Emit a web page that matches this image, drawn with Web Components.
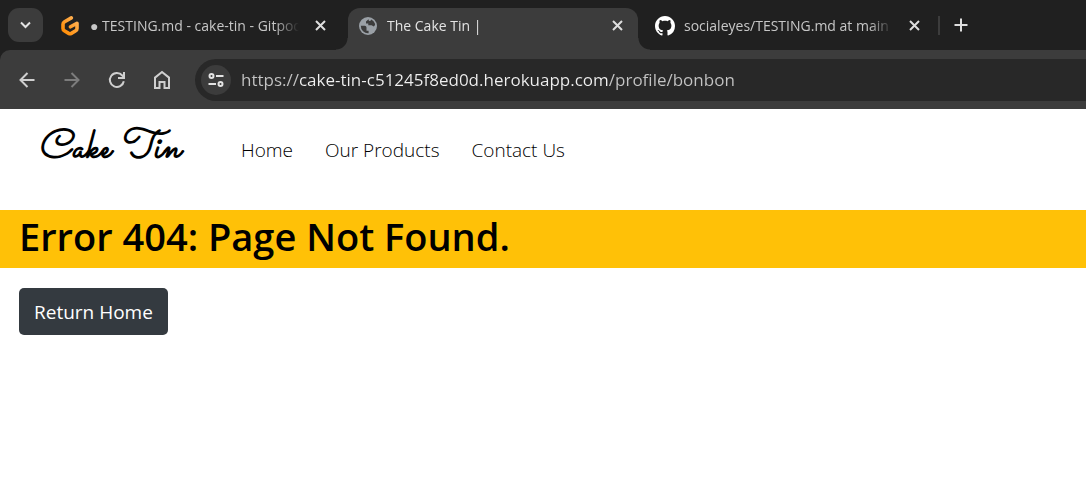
<!DOCTYPE html>
<html lang="en">
<head>
<meta charset="utf-8">
<meta name="viewport" content="width=device-width, initial-scale=1">
<title>The Cake Tin |</title>
<style>
  body { margin: 0; background: #fff; color: #000; font-family: "Open Sans", "Noto Sans", sans-serif; }
</style>
</head>
<body>
<browser-window></browser-window>

<template id="t-window">
  <style>
    :host { display: block; }
    .chrome { background: #202020; }
    .strip { display: flex; align-items: flex-end; height: 50px; padding-left: 8px; overflow: hidden; }
    .search { width: 35px; height: 34px; margin: 0 8px 8px 0; flex: none; border: 0; padding: 0; border-radius: 11px; background: #3c3c3c; display: grid; place-items: center; }
    .tabs { display: flex; gap: 7px; min-width: 0; }
    .divider { width: 2px; height: 19px; margin: 0 9px 15px 3px; background: #3c3c3c; flex: none; }
    .new { border: 0; padding: 0; background: none; width: 24px; height: 24px; margin-bottom: 13px; display: grid; place-items: center; flex: none; }
    svg { display: block; fill: none; }
  </style>
  <header class="chrome">
    <div class="strip">
      <button class="search" aria-label="Search tabs"><svg width="13" height="10" viewBox="0 0 13 10" stroke="#e3e3e3" stroke-width="2"><path d="M2 2.5l4.5 4.5L11 2.5"/></svg></button>
      <div class="tabs">
        <browser-tab>
          <svg slot="icon" width="20" height="20" viewBox="0 0 20 20"><defs><linearGradient id="g" x1="1" y1="0" x2="0" y2="1"><stop offset="0" stop-color="#ffb45b"/><stop offset="1" stop-color="#ff8a00"/></linearGradient></defs><path d="M10.3 1.9L3.600 5.800Q2 6.8 2 8.300V12.500Q2 14 3.300 14.700L7.700 17.400Q9 18.100 10.300 17.400L14.700 14.700Q16 14 16 12.500V7.200L9.500 10.800" stroke="url(#g)" stroke-width="3.600" stroke-linecap="round" stroke-linejoin="round"/></svg>
          ● TESTING.md - cake-tin - Gitpod Code
        </browser-tab>
        <browser-tab active>
          <svg slot="icon" width="20" height="20" viewBox="0 0 20 20"><circle cx="10" cy="10" r="9" fill="#9aa0a6"/><path d="M10.500 3.200L8 5.500V7.400H10.300V9.200H13.600L15.800 10.600Q17.300 9.500 17.100 8.100A7.300 7.300 0 0 0 13.400 3.500Q12.800 5 11 5ZM2.800 9.800A7.200 7.200 0 0 0 10.600 17.200V14.800H8.500V11.500Q8.500 9.800 6.600 9.800Z" fill="#3c3c3c"/></svg>
          The Cake Tin |
        </browser-tab>
        <browser-tab>
          <svg slot="icon" width="20" height="20" viewBox="0 0 16 16"><path fill="#fff" d="M8 0C3.58 0 0 3.58 0 8c0 3.54 2.29 6.53 5.47 7.59.4.07.55-.17.55-.38 0-.19-.01-.82-.01-1.49-2.01.37-2.53-.49-2.69-.94-.09-.23-.48-.94-.82-1.13-.28-.15-.68-.52-.01-.53.63-.01 1.08.58 1.23.82.72 1.21 1.87.87 2.33.66.07-.52.28-.87.51-1.07-1.78-.2-3.64-.89-3.64-3.95 0-.87.31-1.59.82-2.15-.08-.2-.36-1.02.08-2.12 0 0 .67-.21 2.2.82.64-.18 1.32-.27 2-.27s1.36.09 2 .27c1.53-1.04 2.2-.82 2.2-.82.44 1.1.16 1.92.08 2.12.51.56.82 1.27.82 2.15 0 3.07-1.87 3.75-3.65 3.95.29.25.54.73.54 1.48 0 1.07-.01 1.93-.01 2.2 0 .21.15.46.55.38A8.01 8.01 0 0 0 16 8c0-4.42-3.58-8-8-8z"/></svg>
          socialeyes/TESTING.md at main
        </browser-tab>
      </div>
      <span class="divider"></span>
      <button class="new" aria-label="New tab"><svg width="14" height="14" viewBox="0 0 14 14" stroke="#dedede" stroke-width="2"><path d="M7 .5v13M.5 7h13"/></svg></button>
    </div>
    <browser-toolbar></browser-toolbar>
  </header>
  <site-header></site-header>
  <error-page></error-page>
</template>

<template id="t-tab">
  <style>
    :host { display: flex; align-items: center; box-sizing: border-box; flex: 0 1 290px; width: 290px; height: 42px; padding: 0 12px 7px 10px; position: relative; color: #c7c7c7; border-radius: 12px 12px 0 0; }
    :host([active]) { background: #3c3c3c; color: #e3e3e3; }
    :host([active])::before, :host([active])::after { content: ""; position: absolute; bottom: 0; width: 12px; height: 12px; }
    :host([active])::before { right: 100%; background: radial-gradient(circle at 0 0, transparent 11px, #3c3c3c 12px); }
    :host([active])::after { left: 100%; background: radial-gradient(circle at 100% 0, transparent 11px, #3c3c3c 12px); }
    .title { flex: 1; min-width: 0; margin: 0 13px 0 9px; overflow: hidden; white-space: nowrap; font-size: 14px; line-height: 20px; -webkit-mask-image: linear-gradient(to left, transparent, #000 24px); mask-image: linear-gradient(to left, transparent, #000 24px); }
    button { border: 0; background: none; padding: 0; width: 17px; height: 18px; display: grid; place-items: center; color: #dedede; }
  </style>
  <slot name="icon"></slot>
  <span class="title"><slot></slot></span>
  <button aria-label="Close tab"><svg width="11" height="11" viewBox="0 0 11 11" stroke="currentColor" stroke-width="2"><path d="M1 1l9 9M10 1l-9 9"/></svg></button>
</template>

<template id="t-toolbar">
  <style>
    :host { display: flex; align-items: center; height: 59px; background: #3c3c3c; border-radius: 10px 0 0 0; padding-left: 15px; overflow: hidden; }
    button { border: 0; padding: 0; background: none; display: grid; place-items: center; flex: none; }
    nav { display: flex; gap: 21px; margin-right: 21px; }
    nav button { width: 24px; height: 24px; }
    .box { flex: 1; display: flex; align-items: center; gap: 10px; height: 42px; padding-left: 6px; background: #282828; border-radius: 21px 0 0 21px; }
    .box button { width: 30px; height: 30px; border-radius: 50%; background: #3c3c3c; }
    input { flex: 1; min-width: 0; border: 0; padding: 0; outline: 0; font: 17px/24px "Open Sans", "Noto Sans", sans-serif; color: transparent; background: linear-gradient(to right, #c4c4c4 58px, #f0f0f0 58px 367px, #c4c4c4 367px); -webkit-background-clip: text; background-clip: text; }
    svg { fill: none; stroke: #cfcfcf; stroke-width: 2; }
  </style>
  <nav aria-label="Browser">
    <button aria-label="Back"><svg width="16" height="16" viewBox="0 0 16 16"><path d="M15.500 8H2M8.500 1L1.500 8l7 7"/></svg></button>
    <button aria-label="Forward" disabled><svg width="16" height="16" viewBox="0 0 16 16" style="stroke:#7c7c7c"><path d="M.5 8H14M7.500 1l7 7-7 7"/></svg></button>
    <button aria-label="Reload"><svg width="18" height="18" viewBox="0 0 18 18"><path d="M15.800 10.200A7 7 0 1 1 14.300 4.500L16 6.200M16 1v6h-6"/></svg></button>
    <button aria-label="Home page"><svg width="18" height="20" viewBox="0 0 18 20"><path d="M2 7.600L9 2l7 5.600V18h-4.500v-6h-5v6H2Z"/></svg></button>
  </nav>
  <div class="box">
    <button aria-label="View site information"><svg width="16" height="14" viewBox="0 0 16 14" style="stroke:#e3e3e3"><circle cx="3.500" cy="3" r="2"/><path d="M8 3h7.500M.5 11H8"/><circle cx="12.500" cy="11" r="2"/></svg></button>
    <input type="text" aria-label="Address" spellcheck="false" value="https://cake-tin-c51245f8ed0d.herokuapp.com/profile/bonbon">
  </div>
</template>

<template id="t-header">
  <style>
    :host { display: flex; align-items: flex-start; box-sizing: border-box; height: 101px; padding: 10px 38px 0; }
    a { color: #000; text-decoration: none; }
    .brand { font: italic bold 40px/60px "Sacramento", "Petit Formal Script", "Liberation Serif", cursive; width: 203px; flex: none; }
    nav { display: flex; gap: 32px; padding-top: 17px; font-size: 19px; line-height: 28px; font-weight: 300; white-space: nowrap; }
  </style>
  <a class="brand" href="#">Cake Tin</a>
  <nav aria-label="Main"><a href="#">Home</a><a href="#">Our Products</a><a href="#">Contact Us</a></nav>
</template>

<template id="t-error">
  <style>
    :host { display: block; }
    h1 { margin: 0 0 20px; padding: 2px 19px 8px; background: #ffc107; font-size: 38px; line-height: 48px; font-weight: 600; }
    button { margin-left: 19px; padding: 10px 15px 9px; border: 0; border-radius: 5px; background: #343a40; color: #fff; font: 19px/28px "Open Sans", "Noto Sans", sans-serif; }
  </style>
  <main>
    <h1>Error 404: Page Not Found.</h1>
    <button type="button">Return Home</button>
  </main>
</template>

<script>
  const define = (name, id) => customElements.define(name, class extends HTMLElement {
    constructor() {
      super();
      this.attachShadow({ mode: "open" }).append(document.getElementById(id).content.cloneNode(true));
    }
  });
  define("browser-tab", "t-tab");
  define("browser-toolbar", "t-toolbar");
  define("site-header", "t-header");
  define("error-page", "t-error");
  define("browser-window", "t-window");
</script>
</body>
</html>
